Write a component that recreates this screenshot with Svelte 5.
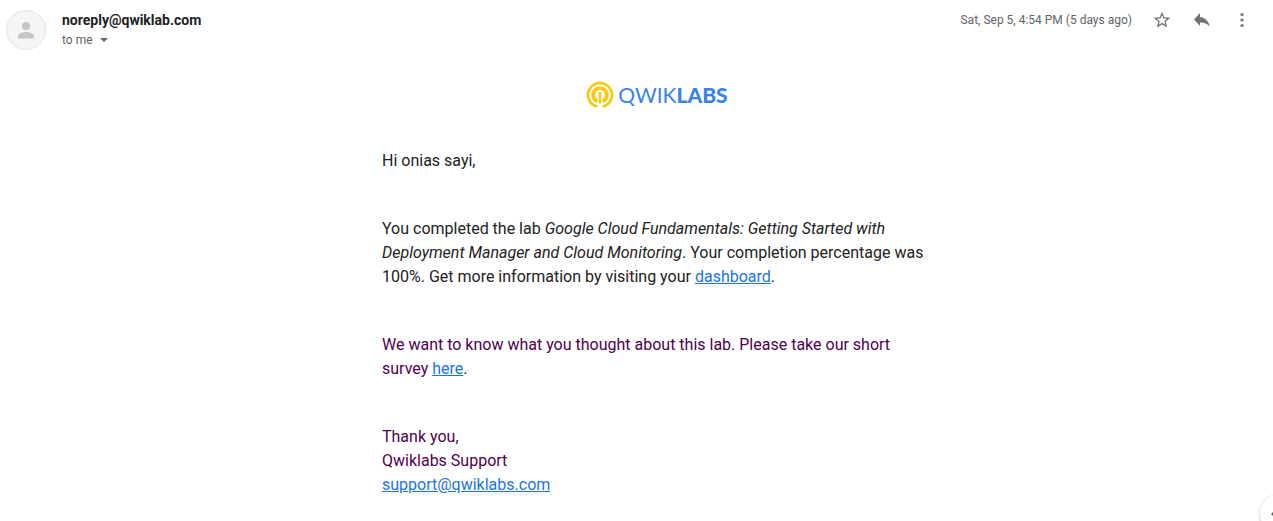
<script>
  const sender = 'noreply@qwiklab.com';
  const sent = 'Sat, Sep 5, 4:54 PM (5 days ago)';
</script>

<main class="message">
  <header class="head">
    <svg class="avatar" viewBox="0 0 40 40" aria-hidden="true">
      <circle cx="20" cy="20" r="19.5" fill="#f5f5f5" stroke="#e2e2e2" />
      <circle cx="20" cy="16" r="4" fill="#c6c6c6" />
      <path d="M12 28.500v-2.500c0-2.700 5.300-4 8-4s8 1.300 8 4v2.500z" fill="#c6c6c6" />
    </svg>
    <div class="who">
      <h1 class="sender">{sender}</h1>
      <button class="recipient" type="button">
        to me
        <svg class="caret" viewBox="0 0 8 4" aria-hidden="true"><path d="M0 0h8L4 4z" fill="#666" /></svg>
      </button>
    </div>
    <time class="date">{sent}</time>
    <div class="actions">
      <button class="action" type="button" aria-label="Star">
        <svg class="icon" viewBox="0 0 24 24"><path d="M22 9.240l-7.190-.62L12 2 9.190 8.630 2 9.240l5.460 4.730L5.820 21 12 17.270 18.180 21l-1.630-7.030L22 9.240zM12 15.400l-3.760 2.270 1-4.280-3.320-2.880 4.380-.38L12 6.100l1.710 4.040 4.380.38-3.320 2.880 1 4.280L12 15.400z" /></svg>
      </button>
      <button class="action" type="button" aria-label="Reply">
        <svg class="icon" viewBox="0 0 20 20"><path d="M8 3v4c5 .5 8.600 4 9.800 9.500C15.500 13.800 12.500 12.400 8 12.400V16L2 9.500z" /></svg>
      </button>
      <button class="action" type="button" aria-label="More">
        <svg class="icon" viewBox="0 0 20 20"><circle cx="10" cy="4.500" r="1.600" /><circle cx="10" cy="10" r="1.600" /><circle cx="10" cy="15.500" r="1.600" /></svg>
      </button>
    </div>
  </header>

  <article class="body">
    <div class="logo">
      <svg class="mark" viewBox="0 0 28 28" aria-hidden="true">
        <g fill="none" stroke="#f4ca16">
          <path d="M11.200 25.700A12 12 0 1 1 16.800 25.700" stroke-width="2.800" />
          <path d="M11.400 20.200A6.800 6.800 0 1 1 16.600 20.200" stroke-width="3.800" />
          <path d="M14 11v11.500" stroke-width="2.600" />
        </g>
      </svg>
      <span class="wordmark">QWIK<b>LABS</b></span>
    </div>
    <p>Hi onias sayi,</p>
    <p>
      You completed the lab <em>Google Cloud Fundamentals: Getting Started with Deployment Manager and Cloud Monitoring</em>.
      Your completion percentage was 100%. Get more information by visiting your <a href="#dashboard">dashboard</a>.
    </p>
    <p class="quoted">We want to know what you thought about this lab. Please take our short survey <a href="#survey">here</a>.</p>
    <p class="quoted">
      Thank you,<br />Qwiklabs Support<br /><a href="mailto:support@qwiklabs.com">support@qwiklabs.com</a>
    </p>
  </article>

  <button class="panel-toggle" type="button" aria-label="Show side panel">
    <svg viewBox="0 0 8 10" aria-hidden="true"><path d="M6 0v10L1 5z" fill="#5f6368" /></svg>
  </button>
</main>

<style>
  :global(body) {
    margin: 0;
    background: #fff;
  }
  .message {
    position: relative;
    box-sizing: border-box;
    min-height: 100vh;
    overflow: hidden;
    font-family: Roboto, Arial, sans-serif;
    color: #222;
  }
  button {
    border: 0;
    padding: 0;
    background: none;
    font: inherit;
    color: inherit;
    cursor: pointer;
  }
  .head {
    display: flex;
    align-items: flex-start;
    padding: 10px 21px 0 6px;
  }
  .avatar {
    flex: none;
    width: 40px;
    height: 40px;
    margin-right: 16px;
  }
  .who {
    flex: 1;
  }
  .sender {
    margin: 0;
    font-size: 14px;
    line-height: 20px;
    font-weight: 700;
    color: #202124;
  }
  .recipient {
    display: flex;
    align-items: center;
    gap: 7px;
    font-size: 12px;
    line-height: 20px;
    color: #5f6368;
  }
  .caret {
    width: 8px;
    height: 4px;
  }
  .date {
    font-size: 12px;
    line-height: 20px;
    color: #5f6368;
  }
  .actions {
    display: flex;
    gap: 20px;
    margin-left: 20px;
  }
  .action {
    display: flex;
    width: 20px;
    height: 20px;
  }
  .icon {
    width: 20px;
    height: 20px;
    fill: #737373;
  }
  .body {
    max-width: 550px;
    margin: 0 auto;
    padding: 30px 20px 24px 61px;
    font-size: 16px;
    line-height: 24px;
  }
  .logo {
    display: flex;
    align-items: center;
    justify-content: center;
    gap: 4px;
    height: 30px;
    margin-bottom: 39px;
  }
  .mark {
    width: 28px;
    height: 28px;
  }
  .wordmark {
    font-family: Lato, sans-serif;
    font-size: 21px;
    font-weight: 400;
    line-height: 28px;
    color: #3b82e6;
  }
  .wordmark b {
    font-weight: 900;
  }
  p {
    margin: 0 0 44px;
  }
  p:last-child {
    margin-bottom: 0;
  }
  .quoted {
    color: #500050;
  }
  a {
    color: #1a73e8;
    text-decoration: underline;
  }
  .panel-toggle {
    position: absolute;
    right: -27px;
    bottom: -13px;
    display: flex;
    align-items: center;
    width: 40px;
    height: 40px;
    padding-left: 10px;
    border-radius: 50%;
    background: #fff;
    box-shadow: 0 1px 3px rgba(60, 64, 67, 0.4);
  }
  .panel-toggle svg {
    width: 8px;
    height: 10px;
  }
</style>
